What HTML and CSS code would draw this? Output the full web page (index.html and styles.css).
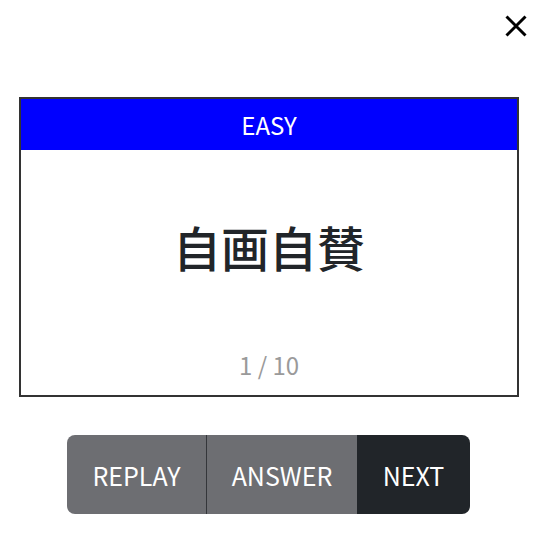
FILE: index.html
```html
<!DOCTYPE html>
<html lang="ja">
<head>
<meta charset="utf-8">
<link rel="stylesheet" href="styles.css">
</head>
<body>
<div class="topbar">
  <button class="close" aria-label="close">
    <svg width="22" height="22" viewBox="0 0 22 22"><path d="M1.5 1.5 L20.5 20.5 M20.5 1.5 L1.5 20.5" stroke="#000" stroke-width="3" fill="none"/></svg>
  </button>
</div>
<div class="card">
  <div class="card-header">EASY</div>
  <div class="card-body">
    <div class="word">自画自賛</div>
    <div class="counter">1 / 10</div>
  </div>
</div>
<div class="controls">
  <div class="btn-group">
    <button class="btn btn-gray btn-first">REPLAY</button>
    <button class="btn btn-gray btn-mid">ANSWER</button>
    <button class="btn btn-dark">NEXT</button>
  </div>
</div>
</body>
</html>
```
FILE: styles.css
```css
html, body {
  margin: 0;
  padding: 0;
  background: #fff;
}
body {
  font-family: "Noto Sans CJK JP", "Noto Sans", sans-serif;
  color: #212529;
}
.topbar {
  display: flex;
  justify-content: flex-end;
  padding: 15px 13px 0 0;
}
.close {
  display: block;
  width: 22px;
  height: 22px;
  padding: 0;
  margin: 0;
  border: 0;
  background: none;
}
.close svg {
  display: block;
}
.card {
  width: 496px;
  margin: 60px 0 0 19px;
  border: 2px solid #333;
}
.card-header {
  height: 51px;
  line-height: 51px;
  background: #0000ff;
  color: #fff;
  text-align: center;
  font-size: 24px;
}
.card-body {
  height: 245px;
  display: flex;
  flex-direction: column;
  align-items: center;
  box-sizing: border-box;
  padding-top: 72px;
}
.word {
  font-size: 48px;
  line-height: 48px;
  font-weight: 500;
}
.counter {
  margin-top: auto;
  margin-bottom: 18px;
  font-size: 24px;
  line-height: 24px;
  color: #9a9a9a;
}
.controls {
  display: flex;
  justify-content: center;
  padding: 38px 3px 0 0;
}
.btn-group {
  display: flex;
  border-radius: 8px;
  overflow: hidden;
}
.btn {
  font-family: "Noto Sans CJK JP", "Noto Sans", sans-serif;
  font-size: 25px;
  height: 79px;
  border: 0;
  margin: 0;
  color: #fff;
  padding: 0;
}
.btn-gray {
  background: #6d6e72;
}
.btn-first {
  border-right: 1px solid #34363a;
  width: 140px;
}
.btn-mid {
  width: 150px;
}
.btn-dark {
  background: #212529;
  width: 113px;
}
```
